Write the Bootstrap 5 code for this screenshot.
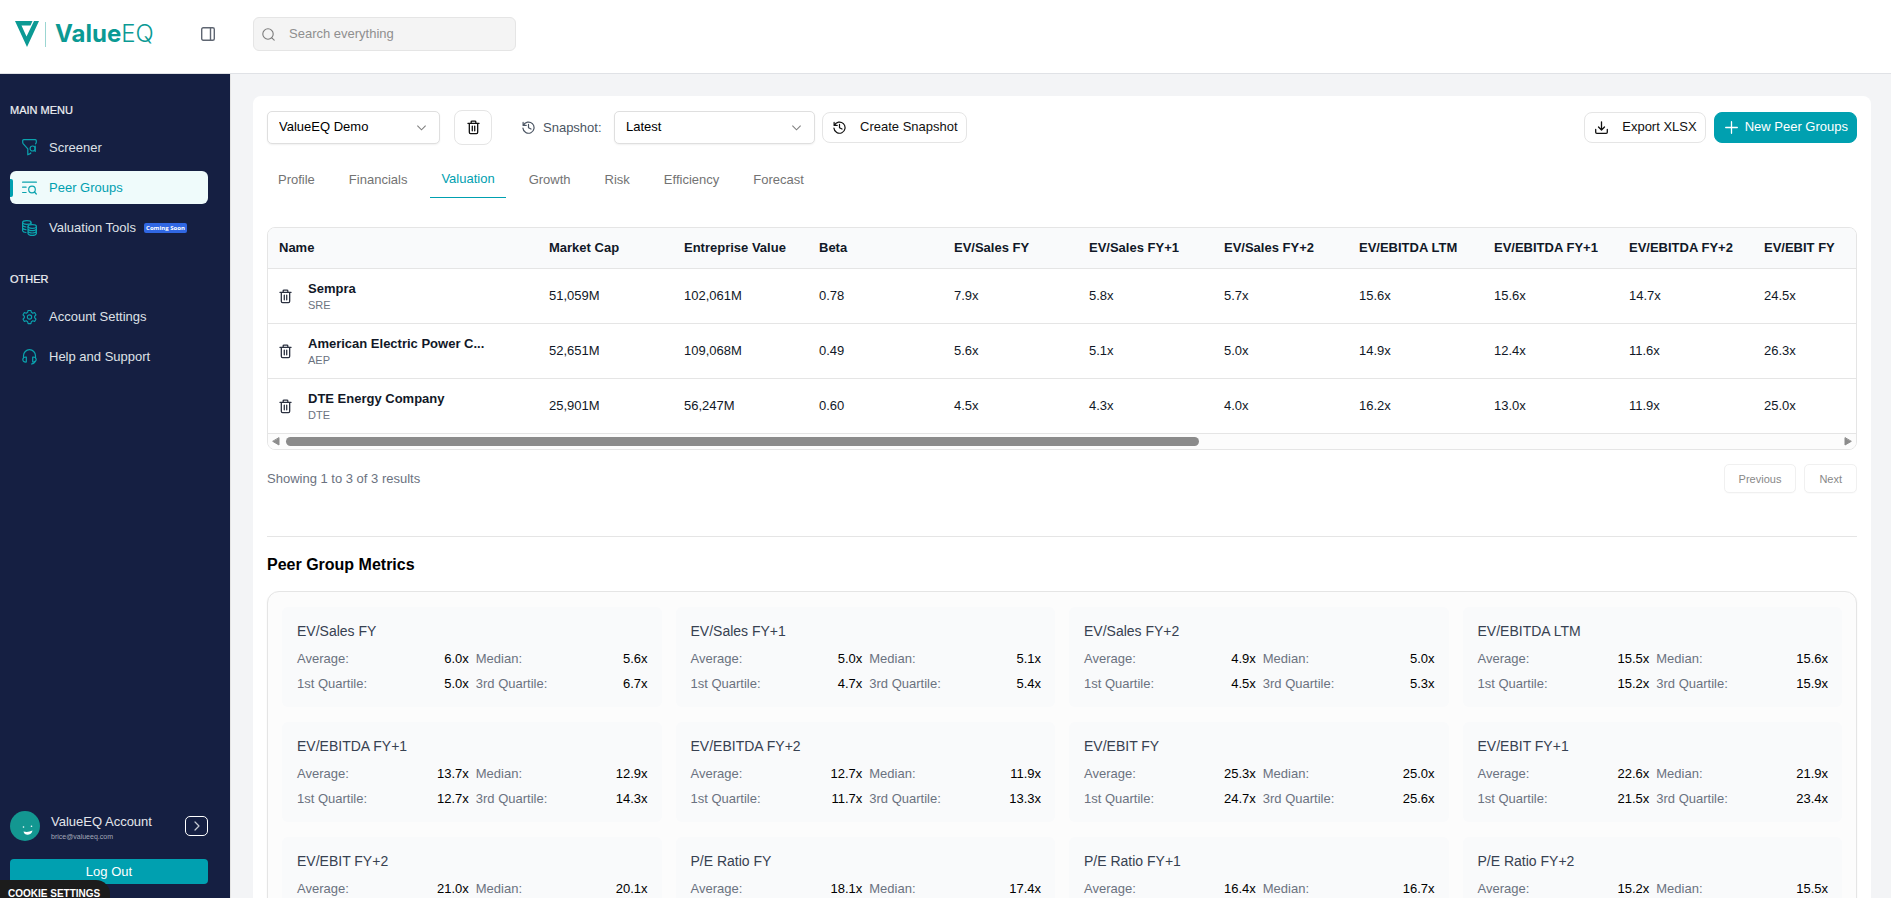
<!DOCTYPE html>
<html lang="en">
<head>
<meta charset="utf-8">
<meta name="viewport" content="width=device-width, initial-scale=1">
<title>ValueEQ - Peer Groups</title>
<link href="https://cdn.jsdelivr.net/npm/bootstrap@5.3.0/dist/css/bootstrap.min.css" rel="stylesheet">
<style>
:root{--teal:#00a0b0;--line:#e5e5e5;--ink:#111827;--muted:#6b7280}
body{font-family:"Liberation Sans",Arial,sans-serif;font-size:13px;line-height:20px;color:var(--ink);background:#f3f4f6}
button,input,select{font:inherit}
svg{display:block;flex:none;fill:none;stroke:currentColor;stroke-linecap:round;stroke-linejoin:round}
a{text-decoration:none}
.shell{height:100vh;overflow:hidden}
.topbar{height:74px;background:#fff;border-bottom:1px solid #e0e2e6;padding:0 15px 5px}
.brand{width:186px;color:#0b9a94}
.brand-rule{width:1px;height:25px;background:#9bd6d2;margin:0 9px 0 6px}
.brand-name{font:700 24px/28px Inter,sans-serif;color:#0b9a94}
.brand-name span{font-weight:300}
.panel-toggle{color:#5f6672;width:38px}
.search-box{width:263px;height:34px;margin-left:14px;border:1px solid var(--line);border-radius:6px;background:#f4f4f4;color:#7c7c7c;padding:0 8px}
.search-box input{border:0;background:transparent;outline:0;margin-left:14px;padding:0;min-width:0}
.search-box input::placeholder{color:#8f8f8f;opacity:1}
.sidebar{width:231px;flex:none;background:#151f42;border-right:1px solid var(--line);padding:25px 22px 14px 10px;color:#e3e5ea}
.menu-title{font-size:11px;font-weight:400;margin:0;color:#f0f1f4;-webkit-text-stroke:.2px}
.side-list{gap:7px;margin:10px 0 24px}
.side-link{height:33px;padding:0 12px;gap:12px;color:#dfe1e7;border-radius:6px;position:relative}
.side-link svg{color:#0ba3ae}
.side-link.active{background:#effbfb;color:var(--teal)}
.side-link.active::before{content:"";position:absolute;left:0;top:8px;width:3px;height:18px;background:var(--teal);border-radius:0 2px 2px 0}
.soon{font:700 6px/10px "Open Sans",sans-serif;width:43px;text-align:center;background:#3067e3;color:#fff;border-radius:2px;margin-left:-4px}
.account{gap:11px}
.avatar{stroke:none}
.mail{font-size:7px;line-height:9px;color:#a4a9b8}
.go{width:23px;height:20px;border:1px solid #fff;border-radius:5px;background:none;color:#c7cad3}
.logout{background:var(--teal);color:#fff;height:25px;border:0;border-radius:4px;padding:0;margin-top:18px}
.cookie{position:fixed;left:0;bottom:0;height:18px;width:110px;border:0;border-radius:0 14px 0 0;background:#1c1c1c;color:#fff;font-weight:700;font-size:10px;line-height:18px;padding:5px 0 0 8px;text-align:left;overflow:hidden}
.main-area{padding:22px 20px 0 22px;min-width:0}
.sheet{background:#fff;border-radius:8px;padding:14px}
.picker{height:33px;border:1px solid #dfdfdf;border-radius:5px;box-shadow:0 1px 2px rgba(0,0,0,.06);color:#000;font-size:13px;line-height:20px;padding:0 30px 2px 11px;background-position:right 12px center;background-size:11px 11px;background-image:url("data:image/svg+xml,%3Csvg xmlns='http://www.w3.org/2000/svg' viewBox='0 0 12 12'%3E%3Cpath fill='none' stroke='%23808080' stroke-width='1.2' d='M1.500 4 6 8.500 10.500 4'/%3E%3C/svg%3E")}
.pick-group{width:173px}
.pick-snap{width:201px}
.tool{height:31px;border:1px solid var(--line);border-radius:8px;background:#fff;color:#111;padding:0 8px 1px 10px;gap:14px;white-space:nowrap}
.tool-del{width:38px;height:35px;padding:0;margin:0 30px 0 14px}
.tool-new{background:var(--teal);border-color:var(--teal);color:#fff;gap:7px}
.snap-label{color:#4b5563;width:92px}
.tool-snap{margin-left:7px}
.tabs{gap:12px;margin:19px 0 29px}
.tabs a{color:#737373;padding:6px 11px 7px;border-bottom:1px solid transparent}
.tabs a.active{color:var(--teal);border-color:var(--teal);padding:5px 11px 8px}
.grid-box{border:1px solid var(--line);border-radius:8px;overflow:hidden}
.peer-table{table-layout:fixed;width:1620px;min-width:100%;color:var(--ink);border-collapse:separate;border-spacing:0}
.peer-table th,.peer-table td{padding:0 0 0 11px;border-bottom:1px solid var(--line);white-space:nowrap;width:135px}
.peer-table th{height:41px;background:#f9fafb;font-weight:700}
.peer-table td{height:55px}
.peer-table .first{width:270px}
.del{border:0;background:none;padding:0;color:#2b3140}
.ticker{font-size:11px;line-height:13px;padding-bottom:2px;color:var(--muted)}
.hbar{height:15px;background:#fcfcfc;padding:0 4px;gap:6px}
.hbar button{border:0;padding:0;background:none;color:#8b8b8b}
.hbar-track{height:9px}
.hbar-thumb{height:9px;border-radius:5px;background:#8b8b8b}
.pager{height:29px;border:1px solid #f0f0f0;border-radius:5px;background:#fff;color:#888;font-size:11px;padding:0 14px;box-shadow:0 1px 1px rgba(0,0,0,.02)}
.result-row{padding:14px 0 43px;border-bottom:1px solid var(--line);color:var(--muted)}
.metrics-title{font-size:16px;line-height:24px;font-weight:700;color:#000;margin:16px 0 14px}
.metrics{display:grid;grid-template-columns:repeat(4,minmax(0,1fr));gap:15px 14px;border:1px solid var(--line);border-radius:12px;background:#fcfcfc;padding:15px 14px;box-shadow:0 1px 2px rgba(0,0,0,.06)}
.metric{background:#f9fafb;border-radius:6px;padding:14px 14px 13px 15px}
.metric h3{font-size:14px;line-height:20px;font-weight:400;color:#374151;margin:0 0 8px}
.metric dl{display:grid;grid-template-columns:1fr 1fr;gap:5px 7px;margin:0}
.metric dt{font-weight:400;color:var(--muted)}
.metric dd{margin:0;color:#000}
</style>
</head>
<body>
<svg width="0" height="0" class="position-absolute">
  <defs>
    <symbol id="trash" viewBox="0 0 14 16"><path d="M1 3.500h12M4.500 3.300V2q0-.9.9-.9h3.200q.9 0 .9.900v1.300M2.500 3.500v9.700q0 1.300 1.300 1.300h6.400q1.300 0 1.300-1.300V3.500M5.700 6.500v5M8.300 6.500v5" stroke-width="1.400"/></symbol>
    <symbol id="history" viewBox="0 0 14 14"><path d="M1.200 1.500v3.300h3.300M1.500 4.700a6 6 0 1 1-.5 3M7 3.700V7.200l2.700 1.500" stroke-width="1.300"/></symbol>
  </defs>
</svg>
<div class="shell d-flex flex-column">
  <header class="topbar d-flex align-items-center flex-shrink-0">
    <a href="#" class="brand d-flex align-items-center" aria-label="ValueEQ home">
      <svg width="24" height="26" viewBox="0 0 24 26"><path d="M0 0H17.500L15.500 4.500H6.500L11.500 15.500 19 0H24L12 26z" fill="#0b9a94" stroke="none"/></svg>
      <span class="brand-rule"></span>
      <span class="brand-name">Value<span>EQ</span></span>
    </a>
    <button class="panel-toggle btn p-0 border-0" aria-label="Toggle sidebar"><svg width="14" height="14" viewBox="0 0 14 14" stroke-width="1.400"><rect x=".7" y=".7" width="12.600" height="12.600" rx="1.500"/><path d="M9.500 1v12"/></svg></button>
    <label class="search-box d-flex align-items-center">
      <svg width="13" height="13" viewBox="0 0 13 13" stroke-width="1.100"><circle cx="6" cy="6" r="5.200"/><path d="m9.800 9.800 2.400 2.400"/></svg>
      <input type="search" placeholder="Search everything" aria-label="Search everything" class="flex-grow-1">
    </label>
  </header>
  <div class="d-flex flex-grow-1 overflow-hidden">
    <aside class="sidebar d-flex flex-column">
      <h2 class="menu-title lh-lg">MAIN MENU</h2>
      <nav class="side-list d-flex flex-column">
        <a href="#" class="side-link d-flex align-items-center"><svg width="15" height="17" viewBox="0 0 15 17" stroke-width="1.200"><path d="M8.700 13.800v.6l-2.900 1.400V9.800L1.300 4.800Q.7 4 .7 3.200V1.700Q.7.700 1.700.7h11.600q1 0 1 1v1.500q0 .8-.8 1.600"/><circle cx="10.600" cy="9.500" r="2.500"/><path d="M13.200 7v5.500"/></svg>Screener</a>
        <a href="#" class="side-link active d-flex align-items-center"><svg width="15" height="14" viewBox="0 0 15 14" stroke-width="1.200"><path d="M.6 1.200h13.800M.6 6.200h3.500M.6 11.500h3.500M12.500 11l1.800 2"/><circle cx="10" cy="8.500" r="3.300"/></svg>Peer Groups</a>
        <a href="#" class="side-link d-flex align-items-center"><svg width="15" height="16" viewBox="0 0 15 16" stroke-width="1.200"><ellipse cx="4.800" cy="2.500" rx="4.200" ry="1.800"/><path d="M.6 2.500v8.300q.5 1.500 3.400 1.700M.6 5.300q.6 1.400 3.400 1.700M.6 8q.6 1.400 3.400 1.700M9 2.500v1.800"/><ellipse cx="10.200" cy="6.500" rx="4.200" ry="1.800"/><path d="M6 6.500v7q.8 1.900 4.200 1.900t4.200-1.900v-7M6 9q.8 1.700 4.200 1.700T14.400 9M6 11.300q.8 1.700 4.200 1.700t4.200-1.700"/></svg>Valuation Tools<span class="soon">Coming Soon</span></a>
      </nav>
      <h2 class="menu-title lh-lg">OTHER</h2>
      <nav class="side-list d-flex flex-column">
        <a href="#" class="side-link d-flex align-items-center"><svg width="15" height="16" viewBox="0 0 16 16" stroke-width="1.200"><path d="M6.500 1h3l.5 2 1.500.9 2-.7 1.500 2.600L13.500 7.200v1.600l1.500 1.400-1.500 2.600-2-.7-1.500.9-.5 2h-3L6 13l-1.500-.9-2 .7L1 10.200l1.500-1.400V7.200L1 5.800l1.500-2.600 2 .7L6 3z"/><circle cx="8" cy="8" r="2.300"/></svg>Account Settings</a>
        <a href="#" class="side-link d-flex align-items-center"><svg width="15" height="16" viewBox="0 0 15 16" stroke-width="1.200"><path d="M1.500 8.500V6.700a6 6 0 0 1 12 0v1.800M13.200 12q-.6 2.500-3.700 3"/><path d="M4.300 8v5Q1 13.300.8 10.500 1 7.800 4.300 8zM10.700 8v5q3.300.3 3.500-2.500Q14 7.800 10.700 8z"/></svg>Help and Support</a>
      </nav>
      <div class="account mt-auto d-flex align-items-center">
        <svg class="avatar" width="30" height="30" viewBox="0 0 30 30"><circle cx="15" cy="15" r="15" fill="#139791"/><path d="M13.500 20.500q4.500 1.200 9-1-.8 4-4.500 4.200-3.600.2-4.500-3.200z" fill="#fff"/><circle cx="13.500" cy="16" r=".8" fill="#fff"/><circle cx="21.500" cy="15.200" r=".8" fill="#fff"/></svg>
        <div class="flex-grow-1"><div>ValueEQ Account</div><div class="mail">brice@valueeq.com</div></div>
        <button class="go d-flex align-items-center justify-content-center p-0" aria-label="Open account"><svg width="6" height="10" viewBox="0 0 6 10" stroke-width="1.200"><path d="m1 1 4 4-4 4"/></svg></button>
      </div>
      <button class="logout w-100">Log Out</button>
    </aside>
    <main class="main-area flex-grow-1">
      <section class="sheet">
        <div class="d-flex align-items-center">
          <select class="picker pick-group form-select" aria-label="Peer group"><option>ValueEQ Demo</option></select>
          <button class="tool tool-del d-flex align-items-center justify-content-center" aria-label="Delete peer group"><svg width="13" height="15"><use href="#trash"/></svg></button>
          <label for="snap" class="snap-label d-flex align-items-center gap-2"><svg width="13" height="13"><use href="#history"/></svg>Snapshot:</label>
          <select id="snap" class="picker pick-snap form-select"><option>Latest</option></select>
          <button class="tool tool-snap d-flex align-items-center"><svg width="13" height="13"><use href="#history"/></svg>Create Snapshot</button>
          <button class="tool d-flex align-items-center ms-auto me-2"><svg width="13" height="13" viewBox="0 0 13 13" stroke-width="1.300"><path d="M.7 8.500v2.700q0 1.100 1.100 1.100h9.400q1.100 0 1.100-1.100V8.500M6.500.8v8M3.500 6l3 3 3-3"/></svg>Export XLSX</button>
          <button class="tool tool-new d-flex align-items-center"><svg width="13" height="13" viewBox="0 0 13 13" stroke-width="1.300"><path d="M6.500.7v11.600M.7 6.500h11.600"/></svg>New Peer Groups</button>
        </div>
        <nav class="tabs d-flex">
          <a href="#">Profile</a><a href="#">Financials</a><a href="#" class="active">Valuation</a><a href="#">Growth</a><a href="#">Risk</a><a href="#">Efficiency</a><a href="#">Forecast</a>
        </nav>
        <div class="grid-box">
          <table class="peer-table">
            <thead><tr><th class="first">Name</th><th>Market Cap</th><th>Entreprise Value</th><th>Beta</th><th>EV/Sales FY</th><th>EV/Sales FY+1</th><th>EV/Sales FY+2</th><th>EV/EBITDA LTM</th><th>EV/EBITDA FY+1</th><th>EV/EBITDA FY+2</th><th>EV/EBIT FY</th></tr></thead>
            <tbody>
              <tr><td><div class="d-flex align-items-center gap-3"><button class="del" aria-label="Remove Sempra"><svg width="13" height="15"><use href="#trash"/></svg></button><div><div class="fw-bold">Sempra</div><div class="ticker">SRE</div></div></div></td><td>51,059M</td><td>102,061M</td><td>0.78</td><td>7.9x</td><td>5.8x</td><td>5.7x</td><td>15.6x</td><td>15.6x</td><td>14.7x</td><td>24.5x</td></tr>
              <tr><td><div class="d-flex align-items-center gap-3"><button class="del" aria-label="Remove American Electric Power"><svg width="13" height="15"><use href="#trash"/></svg></button><div><div class="fw-bold">American Electric Power C...</div><div class="ticker">AEP</div></div></div></td><td>52,651M</td><td>109,068M</td><td>0.49</td><td>5.6x</td><td>5.1x</td><td>5.0x</td><td>14.9x</td><td>12.4x</td><td>11.6x</td><td>26.3x</td></tr>
              <tr><td><div class="d-flex align-items-center gap-3"><button class="del" aria-label="Remove DTE Energy Company"><svg width="13" height="15"><use href="#trash"/></svg></button><div><div class="fw-bold">DTE Energy Company</div><div class="ticker">DTE</div></div></div></td><td>25,901M</td><td>56,247M</td><td>0.60</td><td>4.5x</td><td>4.3x</td><td>4.0x</td><td>16.2x</td><td>13.0x</td><td>11.9x</td><td>25.0x</td></tr>
            </tbody>
          </table>
          <div class="hbar d-flex align-items-center">
            <button aria-label="Scroll left"><svg width="8" height="9" viewBox="0 0 8 9"><path d="M7 1v7L1 4.500z" fill="currentColor"/></svg></button>
            <div class="hbar-track flex-grow-1"><div class="hbar-thumb" style="width:58.8%"></div></div>
            <button aria-label="Scroll right"><svg width="8" height="9" viewBox="0 0 8 9"><path d="M1 1v7l6-3.500z" fill="currentColor"/></svg></button>
          </div>
        </div>
        <div class="result-row d-flex align-items-center gap-2">
          <span class="me-auto">Showing 1 to 3 of 3 results</span>
          <button class="pager">Previous</button><button class="pager">Next</button>
        </div>
        <h2 class="metrics-title">Peer Group Metrics</h2>
        <div class="metrics" id="metrics"></div>
      </section>
    </main>
  </div>
</div>
<button class="cookie">COOKIE SETTINGS</button>
<script src="https://cdn.jsdelivr.net/npm/bootstrap@5.3.0/dist/js/bootstrap.bundle.min.js"></script>
<script>
// name, average, median, first quartile, third quartile
const metrics = [
  ["EV/Sales FY","6.0x","5.6x","5.0x","6.7x"],
  ["EV/Sales FY+1","5.0x","5.1x","4.7x","5.4x"],
  ["EV/Sales FY+2","4.9x","5.0x","4.5x","5.3x"],
  ["EV/EBITDA LTM","15.5x","15.6x","15.2x","15.9x"],
  ["EV/EBITDA FY+1","13.7x","12.9x","12.7x","14.3x"],
  ["EV/EBITDA FY+2","12.7x","11.9x","11.7x","13.3x"],
  ["EV/EBIT FY","25.3x","25.0x","24.7x","25.6x"],
  ["EV/EBIT FY+1","22.6x","21.9x","21.5x","23.4x"],
  ["EV/EBIT FY+2","21.0x","20.1x"],
  ["P/E Ratio FY","18.1x","17.4x"],
  ["P/E Ratio FY+1","16.4x","16.7x"],
  ["P/E Ratio FY+2","15.2x","15.5x"]
];
const labels = ["Average:","Median:","1st Quartile:","3rd Quartile:"];
document.getElementById("metrics").innerHTML = metrics.map(([name, ...values]) =>
  `<article class="metric"><h3>${name}</h3><dl>` +
  values.map((v, i) => `<div class="d-flex justify-content-between"><dt>${labels[i]}</dt><dd>${v}</dd></div>`).join("") +
  `</dl></article>`).join("");
</script>
</body>
</html>
